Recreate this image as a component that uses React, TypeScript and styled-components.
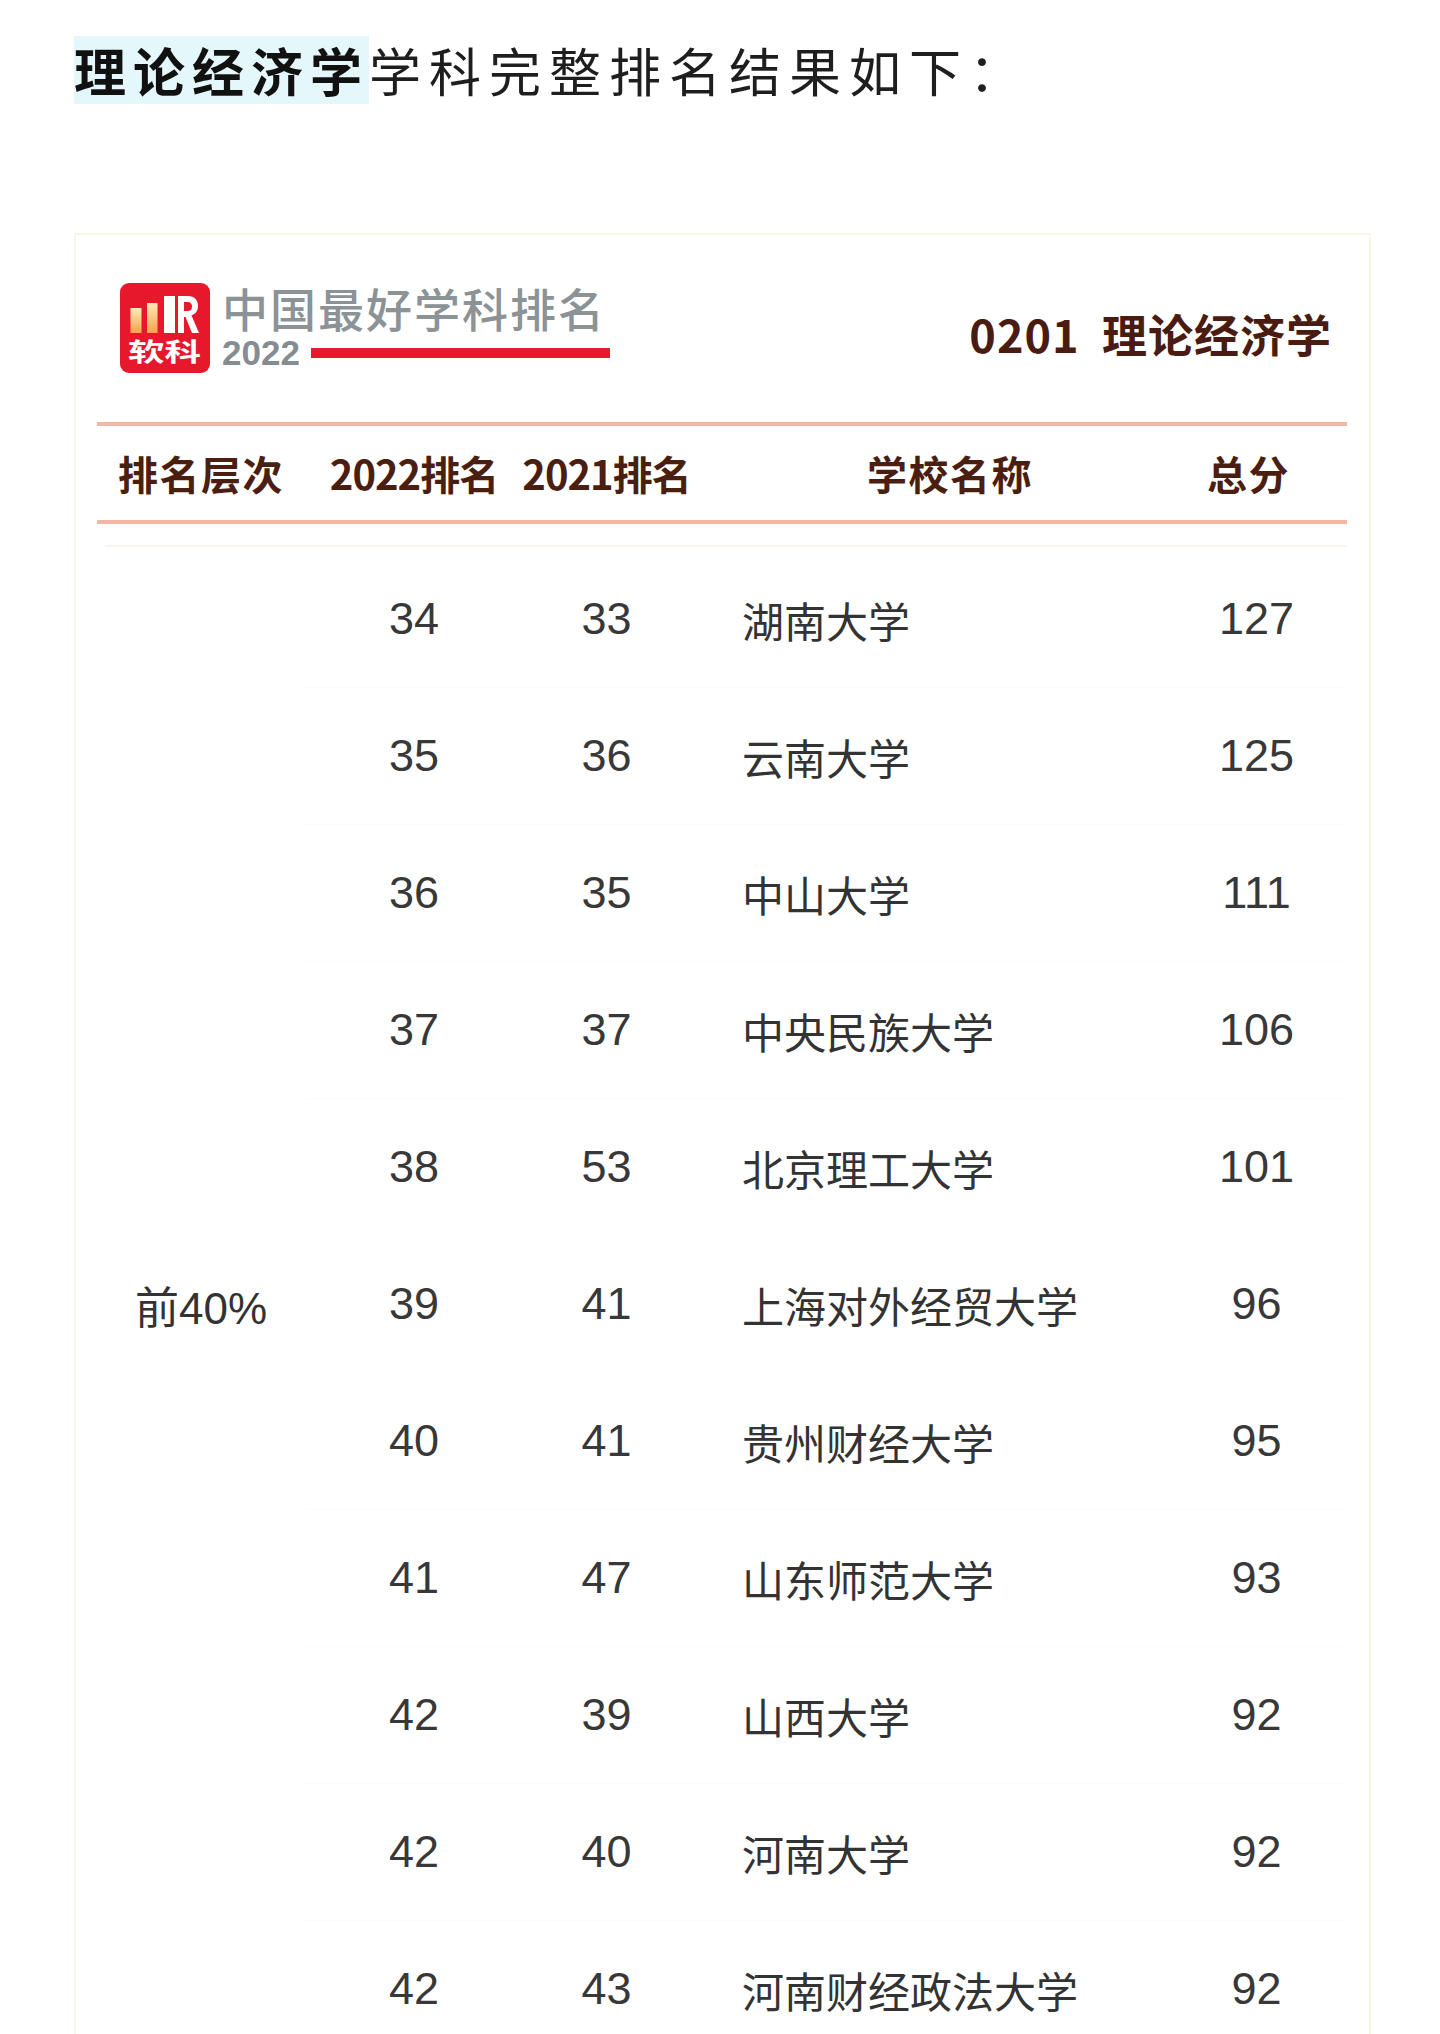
import { Fragment } from "react";
import styled, { createGlobalStyle } from "styled-components";

const GlobalStyle = createGlobalStyle`
  html, body {
    margin: 0;
    padding: 0;
    background: #ffffff;
  }
  body {
    font-family: "Noto Sans CJK SC", "Liberation Sans", sans-serif;
    color: #222;
  }
`;

type Row = {
  rank2022: string;
  rank2021: string;
  school: string;
  score: string;
};

const rows: Row[] = [
  { rank2022: "34", rank2021: "33", school: "湖南大学", score: "127" },
  { rank2022: "35", rank2021: "36", school: "云南大学", score: "125" },
  { rank2022: "36", rank2021: "35", school: "中山大学", score: "111" },
  { rank2022: "37", rank2021: "37", school: "中央民族大学", score: "106" },
  { rank2022: "38", rank2021: "53", school: "北京理工大学", score: "101" },
  { rank2022: "39", rank2021: "41", school: "上海对外经贸大学", score: "96" },
  { rank2022: "40", rank2021: "41", school: "贵州财经大学", score: "95" },
  { rank2022: "41", rank2021: "47", school: "山东师范大学", score: "93" },
  { rank2022: "42", rank2021: "39", school: "山西大学", score: "92" },
  { rank2022: "42", rank2021: "40", school: "河南大学", score: "92" },
  { rank2022: "42", rank2021: "43", school: "河南财经政法大学", score: "92" },
];

const Page = styled.div`
  padding: 36px 0 0 74px;
  width: 1297px;
`;

const Title = styled.h1`
  margin: 0;
  font-size: 52px;
  line-height: 68px;
  font-weight: 400;
  letter-spacing: 8px;
  color: #1e1e1e;
  font-family: "Noto Sans CJK SC", sans-serif;
`;

const Highlight = styled.span`
  display: inline-block;
  background: #e4f8fb;
  font-weight: 700;
  color: #111;
  letter-spacing: 7px;
`;

const Card = styled.div`
  margin-top: 129px;
  border: 2px solid #fdf4e9;
  border-bottom: none;
  padding: 48px 22px 0 21px;
  min-height: 1800px;
`;

const Brand = styled.div`
  display: flex;
  align-items: center;
  justify-content: space-between;
  height: 90px;
  padding: 0 15px 0 23px;
  margin-bottom: 49px;
`;

const BrandLeft = styled.div`
  display: flex;
  align-items: center;
  gap: 12px;
`;

const BrandText = styled.div`
  display: flex;
  flex-direction: column;
  width: 388px;
  margin-top: -2px;
`;

const BrandName = styled.div`
  font-size: 46px;
  line-height: 48px;
  height: 48px;
  font-weight: 500;
  letter-spacing: 2px;
  color: #8b9397;
  white-space: nowrap;
`;

const BrandYearRow = styled.div`
  display: flex;
  align-items: center;
  gap: 11px;
  height: 36px;
  margin-top: 4px;
`;

const BrandYear = styled.span`
  font-family: "Liberation Sans", sans-serif;
  font-weight: 700;
  font-size: 35px;
  line-height: 36px;
  color: #858d92;
`;

const RedBar = styled.span`
  flex: 1;
  height: 10px;
  background: #e81a2e;
`;

const Subject = styled.div`
  font-size: 45px;
  font-weight: 700;
  color: #4a1b10;
  letter-spacing: 1px;
  white-space: pre;
  margin-top: 10px;
`;

const columns = "208px 218px 167px 460px 1fr";

const HeadRow = styled.div`
  display: grid;
  grid-template-columns: ${columns};
  height: 94px;
  border-top: 4px solid #f3b6a3;
  border-bottom: 4px solid #f3b6a3;
`;

const HeadCell = styled.div<{ $shift?: number; $spacing?: number }>`
  display: flex;
  align-items: center;
  justify-content: center;
  padding-left: ${(p) => p.$shift ?? 0}px;
  font-size: 40px;
  font-weight: 700;
  color: #4b1e12;
  letter-spacing: ${(p) => p.$spacing ?? -1}px;
  white-space: nowrap;
`;

const Divider = styled.div`
  height: 2px;
  margin: 21px 0 4px 8px;
  background: #fcf5ee;
`;

const Body = styled.div`
  display: grid;
  grid-template-columns: ${columns};
  grid-auto-rows: 137px;
`;

const TierCell = styled.div<{ $span: number }>`
  grid-column: 1;
  grid-row: 1 / span ${(p) => p.$span};
  display: flex;
  align-items: center;
  justify-content: center;
  font-family: "Liberation Sans", "Noto Sans CJK SC", sans-serif;
  font-size: 44px;
  color: #333;
`;

const Cell = styled.div<{ $align?: "left" | "center"; $pad?: number }>`
  display: flex;
  align-items: center;
  justify-content: ${(p) => (p.$align === "left" ? "flex-start" : "center")};
  padding-left: ${(p) => p.$pad ?? 0}px;
  border-bottom: 1px solid #fbfbfb;
  font-family: "Liberation Sans", "Noto Sans CJK SC", sans-serif;
  font-size: 45px;
  color: #383838;
`;

const SchoolName = styled.span`
  font-family: "Noto Sans CJK SC", sans-serif;
  font-size: 42px;
  color: #333;
`;

const Logo = () => (
  <svg width="90" height="90" viewBox="0 0 90 90">
    <defs>
      <linearGradient id="bar" x1="0" y1="0" x2="0" y2="1">
        <stop offset="0" stopColor="#fdebb8" />
        <stop offset="1" stopColor="#f7a24c" />
      </linearGradient>
    </defs>
    <rect width="90" height="90" rx="9" fill="#e8182c" />
    <rect x="10.5" y="25" width="11" height="25" fill="url(#bar)" />
    <rect x="27" y="20" width="10.5" height="30" fill="url(#bar)" />
    <rect x="44" y="13" width="11" height="37" fill="#ffffff" />
    <path
      fillRule="evenodd"
      fill="#ffffff"
      d="M58 13 H68 C74.5 13 78 17 78 23 C78 28 75.5 31 71.5 32.5 L79 50 H72 L65.5 34 H64 V50 H58 Z M64 19 V28 H67.5 C70.5 28 72 26.5 72 23.5 C72 20.5 70.5 19 67.5 19 Z"
    />
    <text
      x="8"
      y="78"
      fill="#ffffff"
      fontSize="25"
      fontWeight="700"
      textLength="73"
      lengthAdjust="spacingAndGlyphs"
      fontFamily="Noto Sans CJK SC, sans-serif"
    >
      软科
    </text>
  </svg>
);

const App = () => {
  return (
    <>
      <GlobalStyle />
      <Page>
        <Title>
          <Highlight>理论经济学</Highlight>学科完整排名结果如下：
        </Title>
        <Card>
          <Brand>
            <BrandLeft>
              <Logo />
              <BrandText>
                <BrandName>中国最好学科排名</BrandName>
                <BrandYearRow>
                  <BrandYear>2022</BrandYear>
                  <RedBar />
                </BrandYearRow>
              </BrandText>
            </BrandLeft>
            <Subject>{"0201  理论经济学"}</Subject>
          </Brand>
          <HeadRow>
            <HeadCell $spacing={1.5}>排名层次</HeadCell>
            <HeadCell>2022排名</HeadCell>
            <HeadCell>2021排名</HeadCell>
            <HeadCell $shift={60} $spacing={1.5}>
              学校名称
            </HeadCell>
            <HeadCell $spacing={1.5}>总分</HeadCell>
          </HeadRow>
          <Divider />
          <Body>
            <TierCell $span={rows.length}>前40%</TierCell>
            {rows.map((r, i) => (
              <Fragment key={i}>
                <Cell>{r.rank2022}</Cell>
                <Cell>{r.rank2021}</Cell>
                <Cell $align="left" $pad={52}>
                  <SchoolName>{r.school}</SchoolName>
                </Cell>
                <Cell $pad={16}>{r.score}</Cell>
              </Fragment>
            ))}
          </Body>
        </Card>
      </Page>
    </>
  );
};

export default App;
